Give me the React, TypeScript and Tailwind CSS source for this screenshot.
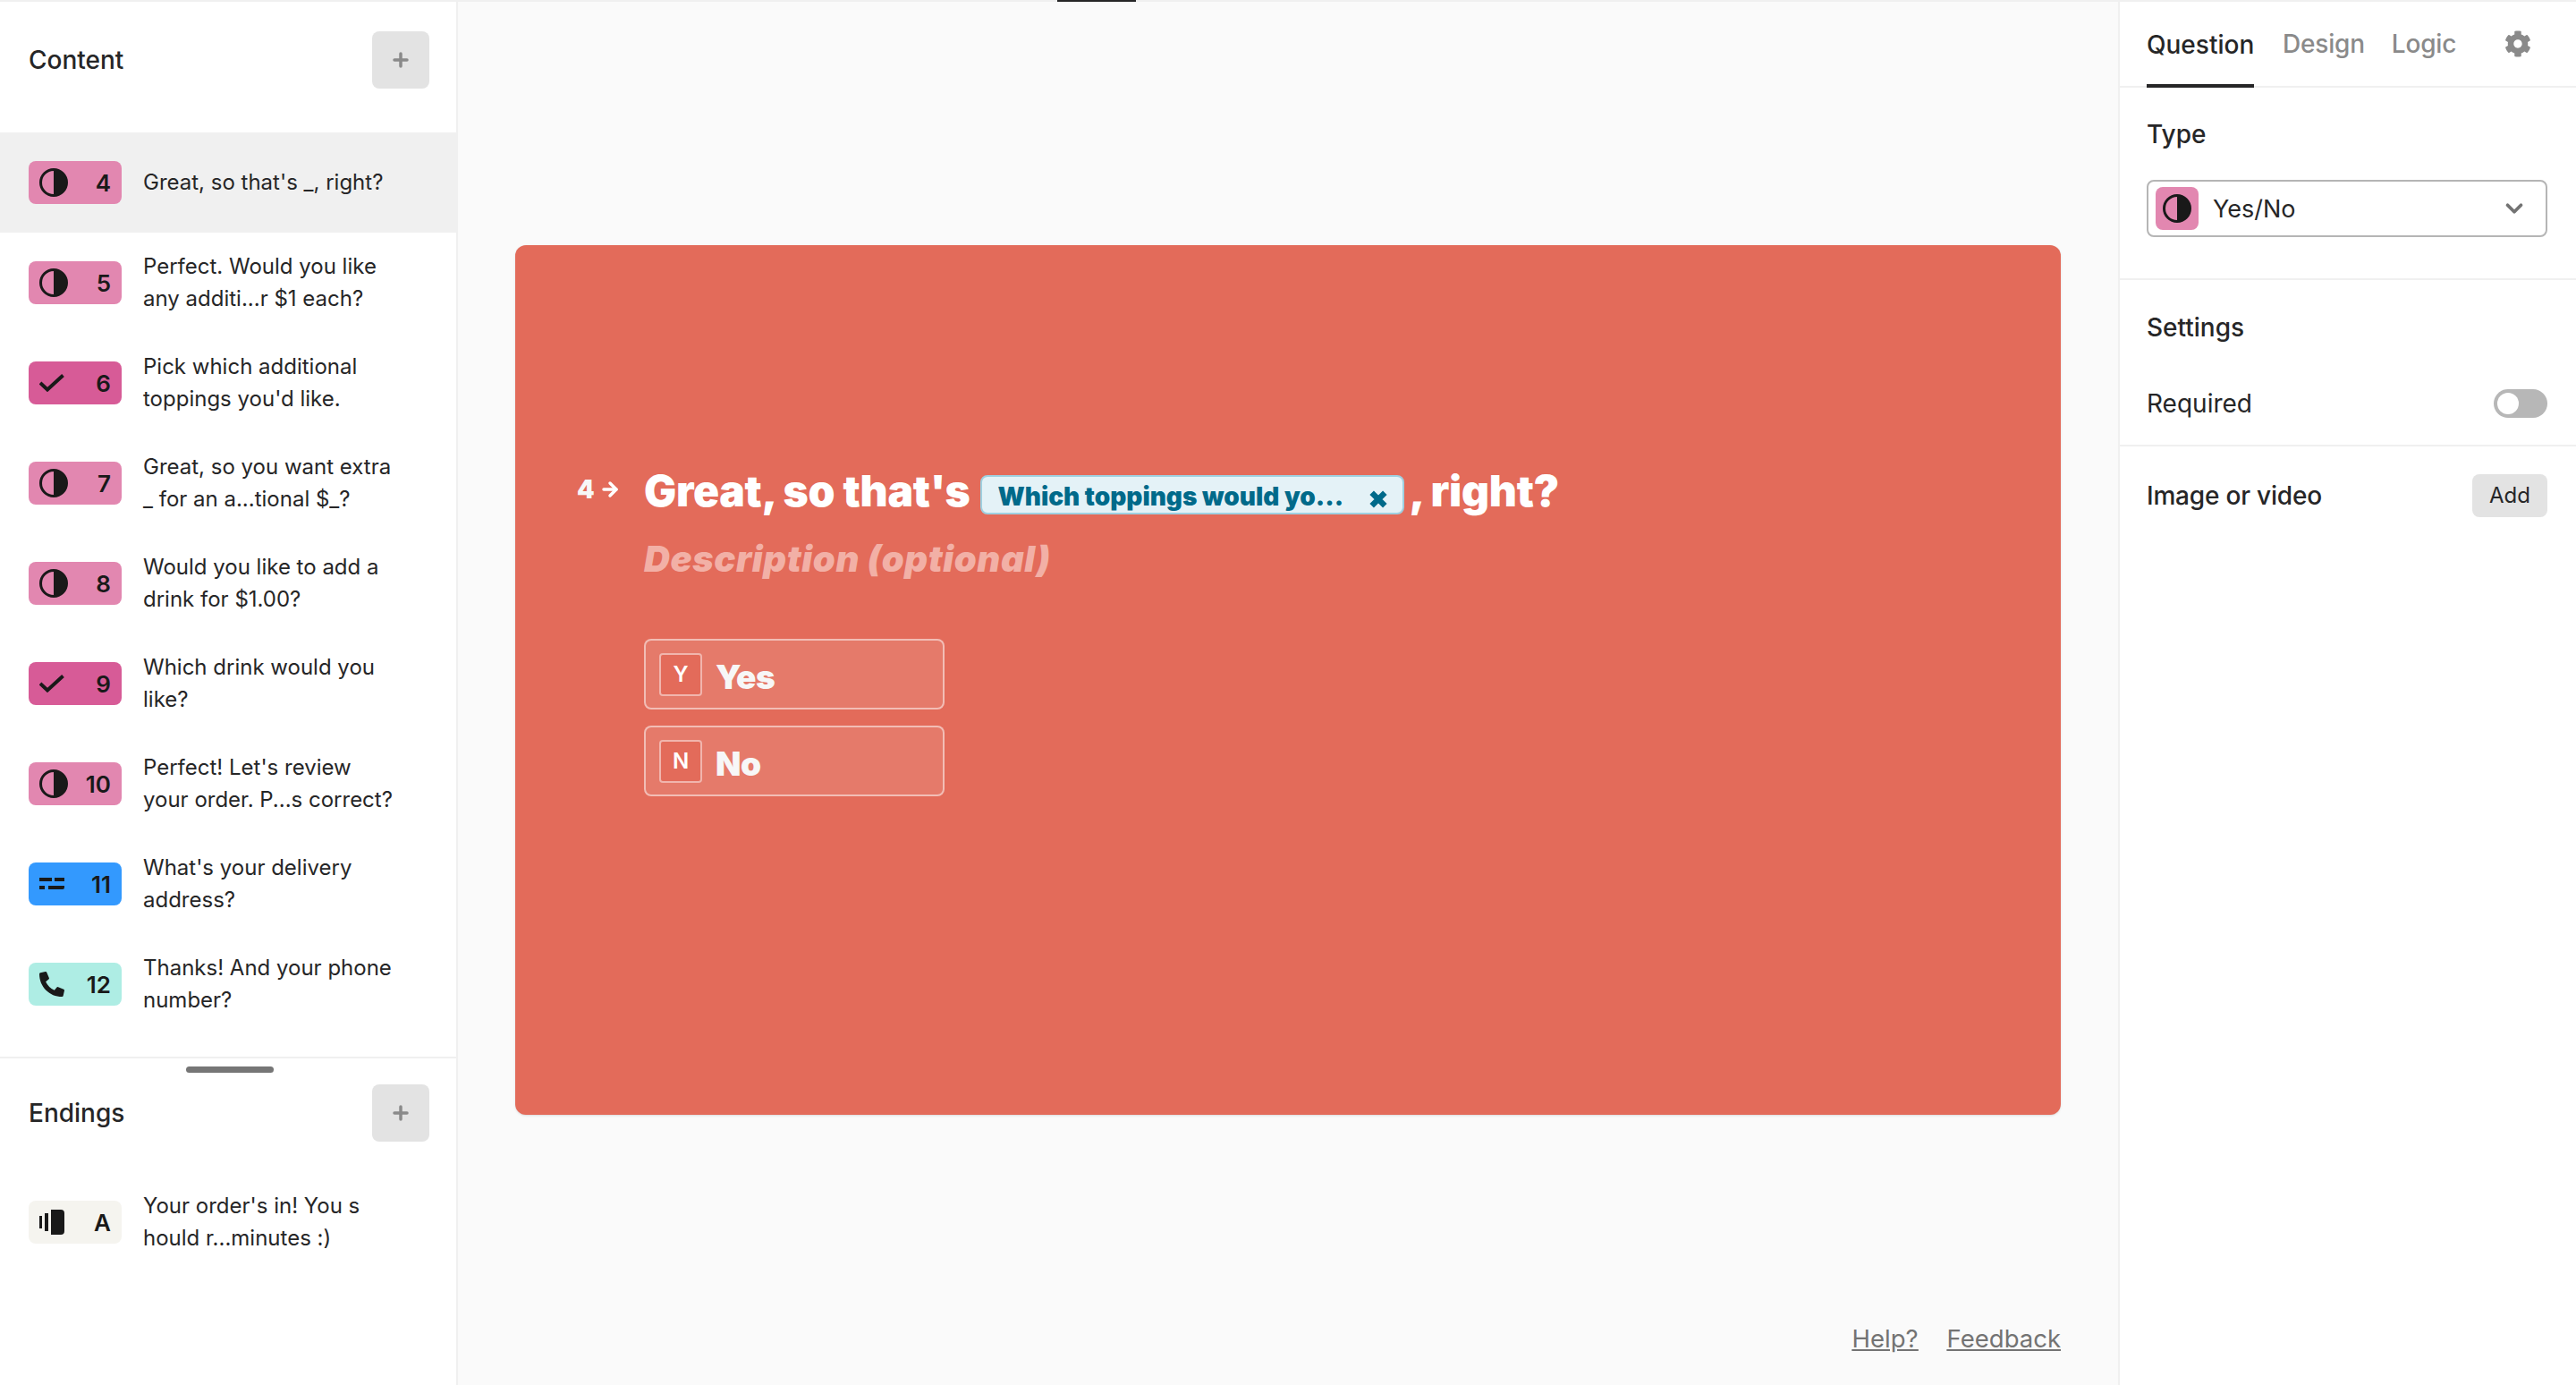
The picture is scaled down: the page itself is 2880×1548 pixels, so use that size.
import { ArrowRight, ChevronDown, Plus } from 'lucide-react';
import { FaCog, FaPhoneAlt } from 'react-icons/fa';

type Kind = 'yesno' | 'choice' | 'short' | 'phone' | 'ending';

interface Question {
  id: string;
  kind: Kind;
  lines: string[];
}

const questions: Question[] = [
  { id: '4', kind: 'yesno', lines: ["Great, so that's _, right?"] },
  { id: '5', kind: 'yesno', lines: ['Perfect. Would you like', 'any additi...r $1 each?'] },
  { id: '6', kind: 'choice', lines: ['Pick which additional', "toppings you'd like."] },
  { id: '7', kind: 'yesno', lines: ['Great, so you want extra', '_ for an a...tional $_?'] },
  { id: '8', kind: 'yesno', lines: ['Would you like to add a', 'drink for $1.00?'] },
  { id: '9', kind: 'choice', lines: ['Which drink would you', 'like?'] },
  { id: '10', kind: 'yesno', lines: ["Perfect! Let's review", 'your order. P...s correct?'] },
  { id: '11', kind: 'short', lines: ["What's your delivery", 'address?'] },
  { id: '12', kind: 'phone', lines: ['Thanks! And your phone', 'number?'] },
];

const badgeColors: Record<Kind, string> = {
  yesno: 'bg-[#e287b0]',
  choice: 'bg-[#d75b97]',
  short: 'bg-[#3399fe]',
  phone: 'bg-[#aeede4]',
  ending: 'bg-[#f5f4ef]',
};

function HalfCircle({ className }: { className?: string }) {
  return (
    <svg className={className} viewBox="0 0 32 32">
      <circle cx="16" cy="16" r="14.5" fill="none" stroke="#191919" strokeWidth="3" />
      <path d="M16 1.5a14.5 14.5 0 0 1 0 29z" fill="#191919" />
    </svg>
  );
}

function KindIcon({ kind }: { kind: Kind }) {
  if (kind === 'yesno') return <HalfCircle className="w-8 h-8" />;
  if (kind === 'choice') {
    return (
      <svg className="w-[28px] h-[20px]" viewBox="0 0 28 20" fill="none">
        <path d="M1 10l8 7.5L26.5 1.5" stroke="#191919" strokeWidth="4" />
      </svg>
    );
  }
  if (kind === 'short') {
    return (
      <svg className="w-[28px] h-[16px]" viewBox="0 0 28 16" fill="#191919">
        <rect x="0" y="1" width="14" height="4" />
        <rect x="17" y="1" width="11" height="4" />
        <rect x="0" y="10" width="6" height="4" />
        <path d="M10 10h18v2a2 2 0 0 1-2 2H10z" />
      </svg>
    );
  }
  if (kind === 'phone') return <FaPhoneAlt className="w-[28px] h-[28px] text-[#191919]" />;
  return (
    <svg className="w-[28px] h-[28px]" viewBox="0 0 28 28" fill="#191919">
      <rect x="0" y="7" width="3" height="14" />
      <rect x="6" y="4" width="4" height="20" />
      <path d="M13 0h11a4 4 0 0 1 4 4v20a4 4 0 0 1-4 4H13z" />
    </svg>
  );
}

function Badge({ kind, id }: { kind: Kind; id: string }) {
  return (
    <div className={`flex items-center justify-between w-[104px] h-12 shrink-0 rounded-lg pl-3 pr-3 ${badgeColors[kind]}`}>
      <KindIcon kind={kind} />
      <span className="text-[26px] font-semibold text-[#191919]">{id}</span>
    </div>
  );
}

function QuestionRow({ q, active }: { q: Question; active?: boolean }) {
  return (
    <div className={`flex items-center gap-[24px] h-[112px] pl-8 ${active ? 'bg-[#f0f0f0]' : ''}`}>
      <Badge kind={q.kind} id={q.id} />
      <div className="text-[24px] leading-[36px] text-[#262627]">
        {q.lines.map((line) => (
          <div key={line}>{line}</div>
        ))}
      </div>
    </div>
  );
}

function AddButton() {
  return (
    <button className="flex items-center justify-center w-16 h-16 rounded-lg bg-[#e3e3e3] text-[#8a8a8a]">
      <Plus className="w-6 h-6" strokeWidth={3.5} />
    </button>
  );
}

function Sidebar() {
  return (
    <aside className="flex flex-col w-[512px] shrink-0 bg-white border-r-2 border-[#f0f0f0]">
      <div className="flex items-center justify-between h-[132px] pl-8 pr-[30px] pb-[2px]">
        <h2 className="text-[28px] font-medium text-[#262627]">Content</h2>
        <AddButton />
      </div>
      <div className="h-[1049px] border-b-2 border-[#f0f0f0] pt-[14px] shrink-0">
        {questions.map((q, i) => (
          <QuestionRow key={q.id} q={q} active={i === 0} />
        ))}
      </div>
      <div className="flex justify-center pt-[9px] pl-[4px]">
        <div className="w-[98px] h-[7px] rounded-full bg-[#767676]" />
      </div>
      <div className="flex items-center justify-between pl-8 pr-[30px] pt-[13px]">
        <h2 className="text-[28px] font-medium text-[#262627]">Endings</h2>
        <AddButton />
      </div>
      <div className="pt-[34px]">
        <QuestionRow q={{ id: 'A', kind: 'ending', lines: ["Your order's in! You s", 'hould r...minutes :)'] }} />
      </div>
    </aside>
  );
}

function AnswerOption({ letter, label }: { letter: string; label: string }) {
  return (
    <div className="flex items-center gap-[15px] w-[336px] h-[79px] pl-[15px] rounded-lg border-2 border-white/50 bg-white/10">
      <div className="flex items-center justify-center w-12 h-12 rounded border-2 border-white/50 bg-[#e36b5a] text-[24px] font-semibold text-white">
        {letter}
      </div>
      <span className="pt-[6px] text-[37px] leading-none font-black tracking-[-0.5px] text-[#f7f7f7]">{label}</span>
    </div>
  );
}

function Canvas() {
  return (
    <main className="flex flex-col flex-1 min-w-0 bg-[#fafafa] px-16 relative">
      <div className="absolute top-[-2px] left-[670px] w-[88px] h-[2px] bg-[#262627]" />
      <section className="mt-[272px] h-[972px] rounded-xl bg-[#e36b5a] shadow-sm pl-[69px] pt-[243px]">
        <div className="flex items-center h-[64px]">
          <div className="flex items-center w-[75px] shrink-0 text-white pb-[4px]">
            <span className="text-[28px] font-black leading-none text-[#f7f7f7]">4</span>
            <ArrowRight className="w-[24px] h-[24px] ml-[5px]" strokeWidth={3.5} />
          </div>
          <h1 className="flex items-center text-[48px] font-black text-white whitespace-nowrap leading-none tracking-[-0.3px]">
            Great, so that's
            <span className="relative flex items-center w-[474px] h-[44px] mt-[8px] ml-[12px] mr-[5px] pl-[17px] rounded-lg border-2 border-[#9fd0e0] bg-[#e4f2f7] text-[28px] tracking-normal text-[#006a8a]">
              <span className="pt-[4px]">Which toppings would yo...</span>
              <svg className="absolute right-[16px] top-[14px] w-[22px] h-[22px]" viewBox="0 0 24 24" fill="none">
                <path d="M4 4l16 16M20 4L4 20" stroke="#006a8a" strokeWidth="7" />
              </svg>
            </span>
            , right?
          </h1>
        </div>
        <p className="pl-[75px] mt-[19px] text-[40px] leading-[50px] italic font-black tracking-[0.6px] text-[#f2b0a6]">Description (optional)</p>
        <div className="flex flex-col gap-[18px] ml-[75px] mt-[64px]">
          <AnswerOption letter="Y" label="Yes" />
          <AnswerOption letter="N" label="No" />
        </div>
      </section>
      <div className="flex justify-end gap-8 mt-[230px] text-[27.5px] text-[#737373] underline">
        <a>Help?</a>
        <a>Feedback</a>
      </div>
    </main>
  );
}

function Inspector() {
  return (
    <aside className="flex flex-col w-[512px] shrink-0 bg-white border-l-2 border-[#f0f0f0] text-[#262627]">
      <div className="flex items-stretch h-[96px] border-b-2 border-[#f0f0f0] pl-[30px] pr-[32px] text-[28px] font-medium">
        <div className="relative flex items-center w-[120px] -mb-[2px] border-b-4 border-[#262627] pt-[4px]">Question</div>
        <div className="flex items-center ml-8 text-[#8a8a8a] tracking-[-0.2px]">Design</div>
        <div className="flex items-center ml-[30px] text-[#8a8a8a] tracking-[-0.2px]">Logic</div>
        <FaCog className="self-center ml-auto mr-[18px] w-[30px] h-[30px] text-[#8a8a8a]" />
      </div>
      <div className="flex flex-col h-[215px] border-b-2 border-[#f0f0f0] pl-[30px] pr-[32px] pt-[34px]">
        <span className="text-[28px] font-medium leading-[36px]">Type</span>
        <div className="flex items-center h-[64px] mt-[33px] pl-[8px] pr-[20px] rounded-lg border-2 border-[#b5b5b5]">
          <div className="flex items-center justify-center w-12 h-12 rounded-lg bg-[#e287b0]">
            <HalfCircle className="w-8 h-8" />
          </div>
          <span className="ml-[16px] text-[27px] pt-[2px]">Yes/No</span>
          <ChevronDown className="ml-auto w-[30px] h-[30px] text-[#737373]" strokeWidth={3} />
        </div>
      </div>
      <div className="flex flex-col h-[186px] border-b-2 border-[#f0f0f0] pl-[30px] pr-[32px] pt-[35px]">
        <span className="text-[28px] font-medium leading-[36px]">Settings</span>
        <div className="flex items-center justify-between mt-[46px]">
          <span className="text-[28px]">Required</span>
          <div className="flex items-center w-[60px] h-8 rounded-full bg-[#b7b7b7] pl-[4px]">
            <div className="w-6 h-6 rounded-full bg-white" />
          </div>
        </div>
      </div>
      <div className="flex items-center justify-between pl-[30px] pr-[32px] pt-[31px]">
        <span className="text-[28px] font-medium tracking-[-0.2px]">Image or video</span>
        <button className="flex items-center justify-center w-[84px] h-12 rounded-lg bg-[#e3e3e3] text-[24px]">Add</button>
      </div>
    </aside>
  );
}

export default function App() {
  return (
    <div className="flex h-[1548px] w-[2880px] border-t-2 border-[#f0f0f0] font-['Inter',sans-serif]">
      <Sidebar />
      <Canvas />
      <Inspector />
    </div>
  );
}
